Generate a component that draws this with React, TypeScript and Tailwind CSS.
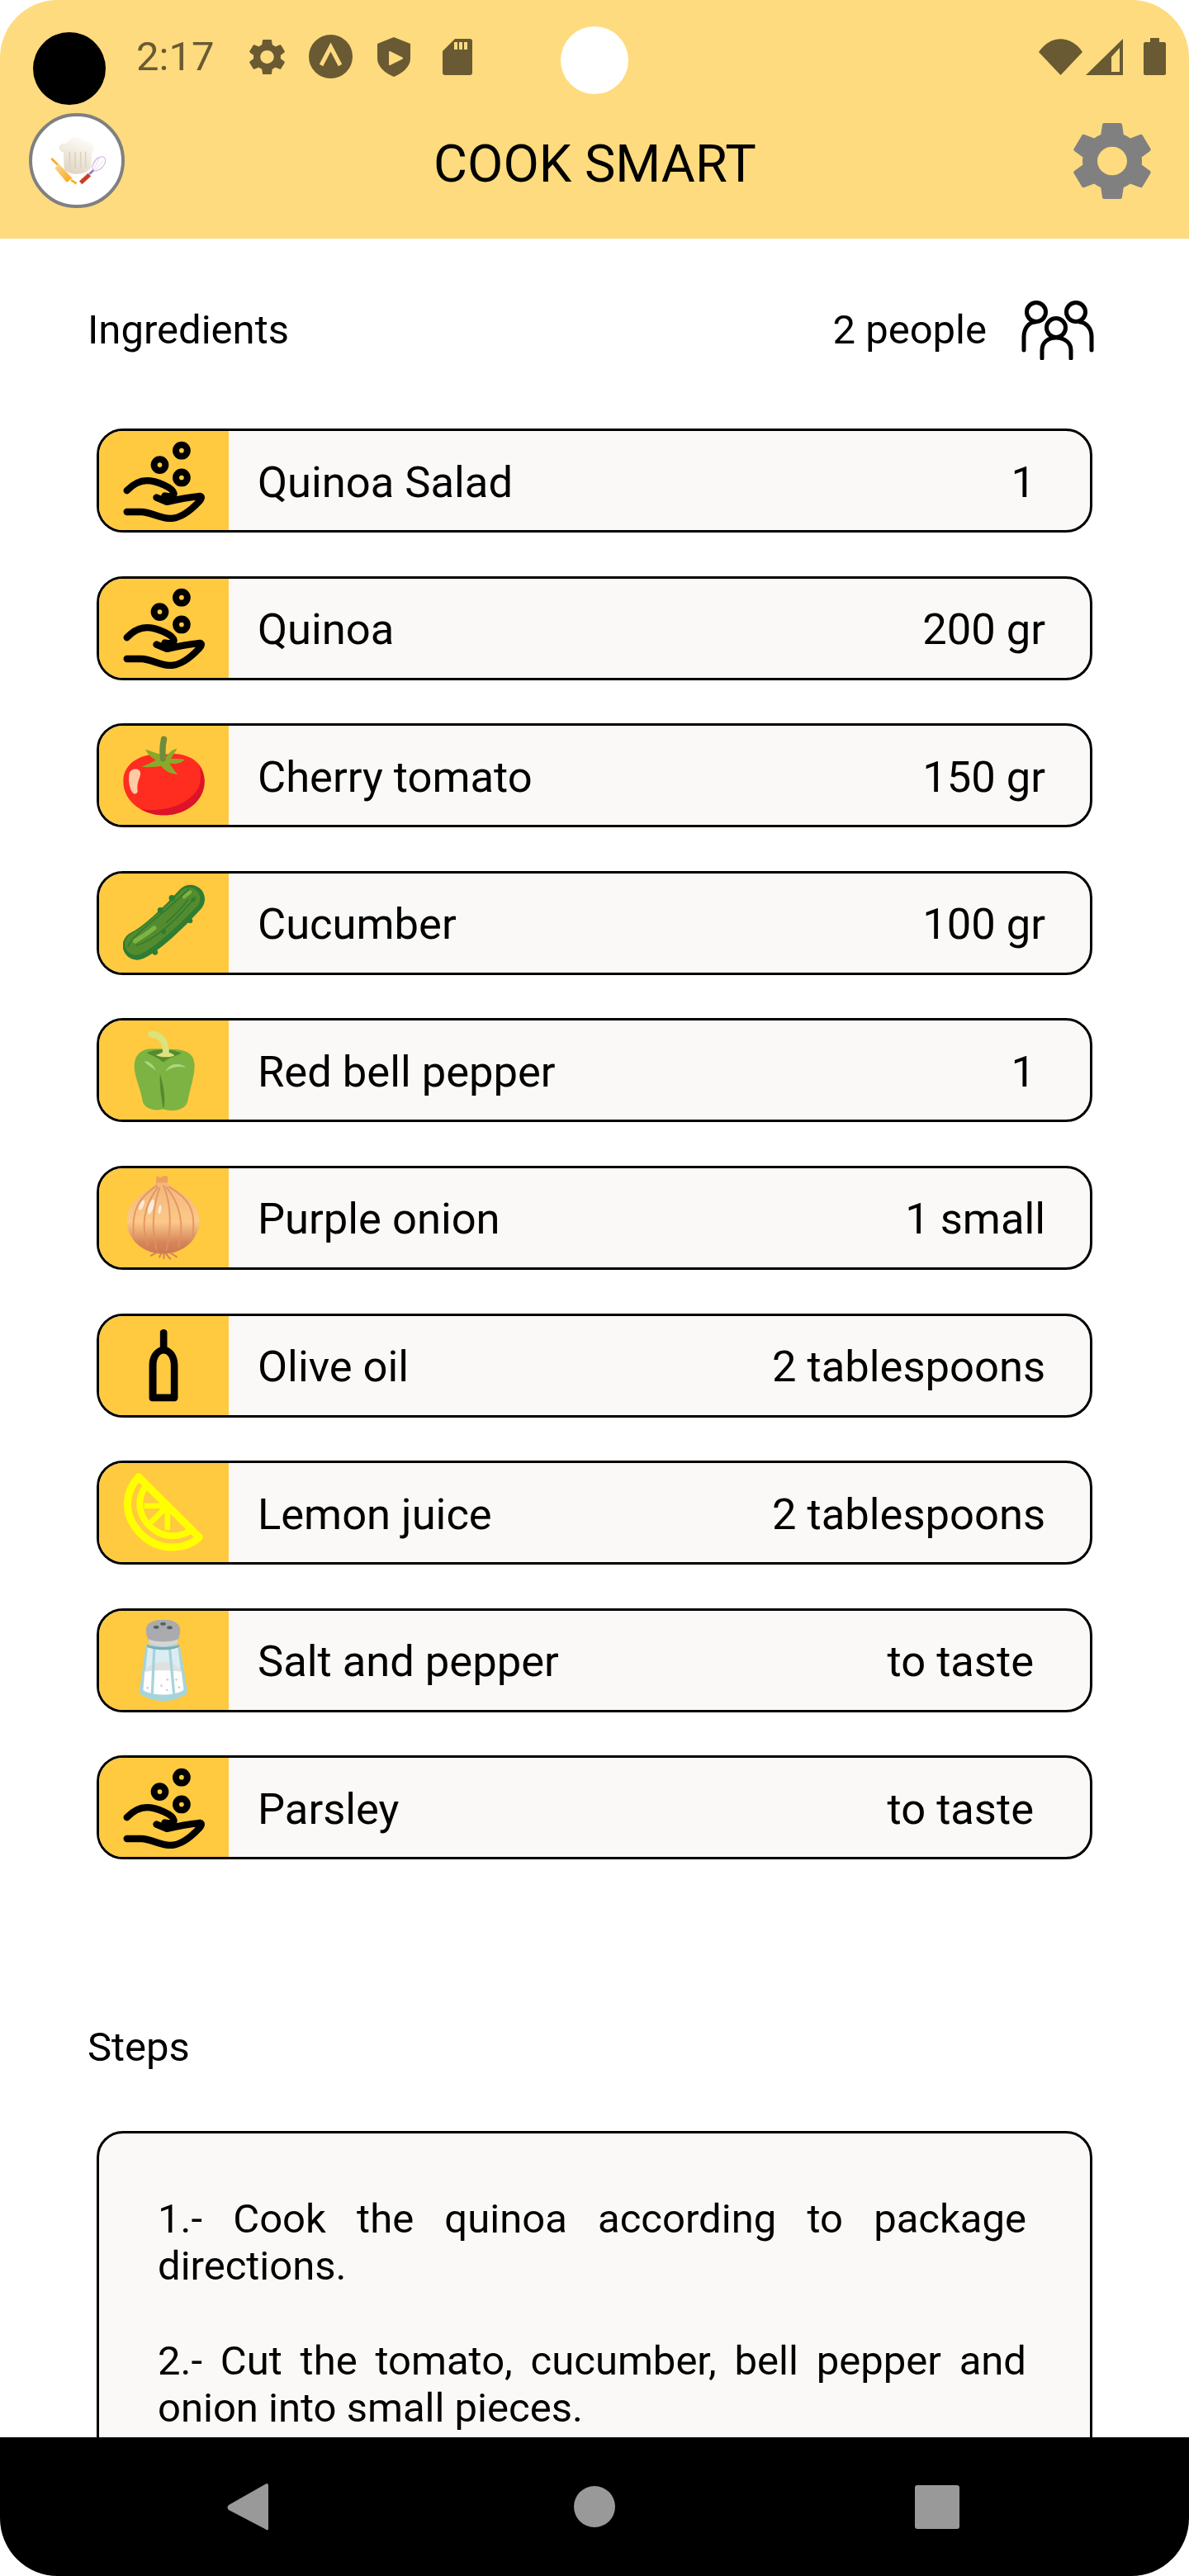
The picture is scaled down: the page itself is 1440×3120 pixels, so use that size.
const settingsPath =
  "M19.14 12.94c.04-.3.06-.61.06-.94 0-.32-.02-.64-.07-.94l2.03-1.58c.18-.14.23-.41.12-.61l-1.92-3.32c-.12-.22-.37-.29-.59-.22l-2.39.96c-.5-.38-1.03-.7-1.62-.94l-.36-2.54c-.04-.24-.24-.41-.48-.41h-3.84c-.24 0-.43.17-.47.41l-.36 2.54c-.59.24-1.13.57-1.62.94l-2.39-.96c-.22-.08-.47 0-.59.22L2.74 8.87c-.12.21-.08.47.12.61l2.03 1.58c-.05.3-.09.63-.09.94s.02.64.07.94l-2.03 1.58c-.18.14-.23.41-.12.61l1.92 3.32c.12.22.37.29.59.22l2.39-.96c.5.38 1.03.7 1.62.94l.36 2.54c.05.24.24.41.48.41h3.84c.24 0 .44-.17.47-.41l.36-2.54c.59-.24 1.13-.56 1.62-.94l2.39.96c.22.08.47 0 .59-.22l1.92-3.32c.12-.22.07-.47-.12-.61l-2.01-1.58zM12 15.6c-1.98 0-3.6-1.62-3.6-3.6s1.62-3.6 3.6-3.6 3.6 1.62 3.6 3.6-1.62 3.6-3.6 3.6z";

function SettingsIcon({ className }: { className: string }) {
  return (
    <svg viewBox="2.6 2 18.8 20" preserveAspectRatio="none" className={className}>
      <path d={settingsPath} fill="currentColor" />
    </svg>
  );
}

function HandIcon() {
  return (
    <svg viewBox="149 98 296 296" className="h-[99px] w-[99px]">
      <g fill="none" stroke="#000" strokeWidth="24">
        <circle cx="361" cy="136" r="20.5" />
        <circle cx="282" cy="188" r="20.5" />
        <circle cx="361" cy="234" r="20.5" />
      </g>
      <path
        d="M163 281C185 258 210 245 235 245C270 245 330 270 333 291C334 300 320 304 300 300M270 306L308 322C350 312 390 305 428 301C436 302 432 312 425 320C395 352 360 382 320 382C280 382 250 358 215 358L163 358"
        fill="none"
        stroke="#000"
        strokeWidth="25"
        strokeLinecap="round"
        strokeLinejoin="round"
      />
    </svg>
  );
}

function TomatoIcon() {
  return (
    <svg viewBox="117 60 296 290" className="h-[97px] w-[99px]">
      <path
        d="M265 130C300 118 412 125 412 225C412 300 340 348 265 348C190 348 118 300 118 225C118 140 220 118 265 130Z"
        fill="#ff2d20"
      />
      <path
        d="M392 168C408 190 412 210 412 225C412 300 340 348 265 348C230 348 195 335 180 325C260 340 360 310 392 245C400 220 400 190 392 168Z"
        fill="#dc1329"
      />
      <path
        d="M140 195C145 178 178 175 180 195C180 215 165 225 170 262C165 278 150 270 145 255C138 235 136 215 140 195Z"
        fill="#ffcba6"
      />
      <path
        d="M198 110C215 115 232 120 250 128L275 135C285 120 295 110 312 107C308 120 298 130 290 142C305 145 325 142 340 147C330 160 305 165 285 160C295 175 305 190 315 200C290 200 265 185 255 170C235 172 210 178 185 172C205 165 225 155 235 148C220 140 205 125 198 110Z"
        fill="#8aa92b"
      />
      <path d="M262 143C259 120 260 95 265 73" fill="none" stroke="#6d8b3c" strokeWidth="22" strokeLinecap="round" />
    </svg>
  );
}

function CucumberIcon() {
  return (
    <svg viewBox="149 87 296 296" className="h-[99px] w-[99px]">
      <path d="M200 318C250 295 335 215 393 150" fill="none" stroke="#2e7d32" strokeWidth="104" strokeLinecap="round" />
      <path d="M196 312C246 288 330 208 388 148" fill="none" stroke="#558b2f" strokeWidth="80" strokeLinecap="round" />
      <path d="M192 302C225 282 245 268 262 254" fill="none" stroke="#7cb342" strokeWidth="16" strokeLinecap="round" />
      <path d="M370 142L392 124" fill="none" stroke="#7cb342" strokeWidth="12" strokeLinecap="round" />
      <path
        d="M166 322C190 270 280 220 388 112M195 318C260 300 340 230 412 140M305 235C340 205 365 180 385 150"
        fill="none"
        stroke="#2e7d32"
        strokeWidth="5"
      />
      <g fill="#2e7d32">
        <circle cx="403" cy="152" r="8" />
        <circle cx="296" cy="268" r="9" />
        <circle cx="326" cy="146" r="11" />
        <circle cx="284" cy="190" r="10" />
        <circle cx="392" cy="228" r="9" />
        <circle cx="265" cy="342" r="10" />
      </g>
    </svg>
  );
}

function PepperIcon() {
  return (
    <svg viewBox="149 620 296 296" className="h-[99px] w-[99px]">
      <path
        d="M240 690C215 695 190 710 190 755C190 790 215 840 220 880C225 905 265 918 295 908C320 918 375 915 383 880C390 840 408 790 408 750C408 710 380 695 340 692C320 690 270 688 240 690Z"
        fill="#7cb342"
      />
      <path d="M235 705C255 688 330 688 360 705C345 715 320 718 295 738C270 718 250 712 235 705Z" fill="#558b2f" />
      <path d="M283 780C280 830 290 880 295 908C305 880 298 830 283 780Z" fill="#558b2f" />
      <path d="M226 736C240 732 258 745 268 768C250 755 236 748 226 736Z" fill="#aed581" />
      <path d="M303 772C315 745 350 735 377 758C350 750 325 755 303 772Z" fill="#aed581" />
      <path
        d="M238 636C240 622 265 622 285 634C305 645 315 670 316 704C325 706 332 710 335 714C320 722 285 722 268 712C280 708 288 705 292 702C294 680 285 658 262 650C250 652 238 648 238 636Z"
        fill="#dce27d"
      />
    </svg>
  );
}

function OnionIcon() {
  return (
    <svg viewBox="149 72 296 310" className="h-[103px] w-[99px]">
      <defs>
        <linearGradient id="onionBody" x1="0" y1="0" x2="0" y2="1">
          <stop offset="0" stopColor="#f3b67c" />
          <stop offset="0.55" stopColor="#fcc98a" />
          <stop offset="0.85" stopColor="#d58358" />
          <stop offset="1" stopColor="#cc7a53" />
        </linearGradient>
      </defs>
      <path d="M270 76L285 82L300 74L310 78L312 110L268 110Z" fill="#eda05f" />
      <path
        d="M275 100C240 135 162 160 162 240C162 310 225 360 294 360C365 360 426 310 426 240C426 160 340 135 310 100Z"
        fill="url(#onionBody)"
      />
      <g fill="none" stroke="#e2925f" strokeWidth="6" opacity="0.85">
        <path d="M272 110C215 150 175 190 188 300" />
        <path d="M276 115C235 170 205 240 240 330" />
        <path d="M282 118C258 180 250 270 270 345" />
        <path d="M295 110C325 180 325 270 305 350" />
        <path d="M305 115C350 170 375 240 350 335" />
        <path d="M315 115C375 150 420 190 400 300" />
      </g>
      <g fill="#fff" opacity="0.7">
        <ellipse cx="216" cy="182" rx="7" ry="20" transform="rotate(25 216 182)" />
        <ellipse cx="250" cy="188" rx="9" ry="28" transform="rotate(18 250 188)" />
        <ellipse cx="282" cy="198" rx="5" ry="16" transform="rotate(10 282 198)" />
      </g>
      <path
        d="M280 350L248 367M288 355L280 374M297 355L297 378M303 358L322 380M318 355L345 372"
        fill="none"
        stroke="#d58358"
        strokeWidth="6"
      />
    </svg>
  );
}

function BottleIcon() {
  return (
    <svg viewBox="149 620 296 280" className="h-[93px] w-[99px]">
      <path
        fillRule="evenodd"
        d="M283 640C283 625 309 625 309 640V694C330 702 348 725 348 760V880C348 887 343 892 336 892H254C247 892 243 887 243 880V760C243 725 262 702 283 694ZM270 865H322V760C322 735 310 718 296 718C282 718 270 735 270 760Z"
        fill="#000"
      />
    </svg>
  );
}

function LemonIcon() {
  return (
    <svg viewBox="149 70 296 296" className="h-[99px] w-[99px]">
      <g fill="none" stroke="#ffff00" strokeLinejoin="round" strokeLinecap="round">
        <path d="M205 87L425 306C385 345 290 365 220 300C150 235 150 150 205 87Z" strokeWidth="27" />
        <path d="M232 120C195 170 205 230 250 270C290 305 345 312 395 282" strokeWidth="24" />
        <path d="M225 192H310V280M310 192L250 252" strokeWidth="20" strokeLinecap="butt" />
      </g>
    </svg>
  );
}

function SaltIcon() {
  return (
    <svg viewBox="149 600 296 300" className="h-[100px] w-[99px]">
      <path d="M232 692L354 692L384 868C360 885 335 898 295 898C260 898 228 885 207 868Z" fill="#a7d3db" />
      <path d="M238 705H348L366 850C340 875 250 875 224 850Z" fill="#dcecf3" />
      <path d="M226 790C260 745 330 745 362 790L370 855C340 878 250 878 222 855Z" fill="#e0e0e0" />
      <path d="M228 792C260 785 330 785 360 792L368 858C340 880 250 880 222 858Z" fill="#fff" />
      <path d="M262 705L254 882M318 705L334 878" fill="none" stroke="#a7d3db" strokeWidth="10" />
      <path d="M234 692C260 705 330 705 354 692L352 700C330 716 260 716 236 700Z" fill="#78aeb8" />
      <path
        d="M232 640C232 612 262 602 295 602C325 602 356 612 356 640C356 660 350 670 348 682C340 705 250 705 242 682C240 670 232 660 232 640Z"
        fill="#a9abae"
      />
      <path d="M242 672C260 685 330 685 348 672L348 684C335 704 255 704 242 684Z" fill="#d6d6d6" />
      <g fill="#5b6066">
        <ellipse cx="269" cy="629" rx="10" ry="6" />
        <ellipse cx="294" cy="617" rx="10" ry="6" />
        <ellipse cx="318" cy="631" rx="10" ry="6" />
      </g>
      <g fill="#cfcfcf">
        <circle cx="238" cy="850" r="4" />
        <circle cx="288" cy="842" r="4" />
        <circle cx="310" cy="820" r="4" />
        <circle cx="342" cy="820" r="4" />
        <circle cx="308" cy="858" r="4" />
        <circle cx="352" cy="848" r="4" />
      </g>
    </svg>
  );
}

function PeopleIcon() {
  return (
    <svg viewBox="0 0 88 72" className="h-[72px] w-[88px]" fill="none" stroke="#000" strokeWidth="5">
      <circle cx="18" cy="14" r="11.5" />
      <circle cx="66" cy="14" r="11.5" />
      <circle cx="42" cy="33" r="11.5" />
      <path d="M3 60V44C3 34 9 26 17 26" strokeLinecap="round" />
      <path d="M85 60V44C85 34 79 27 71 26" strokeLinecap="round" />
      <path d="M25 70V60C25 51 32 45 42 45C52 45 60 51 60 60V70" strokeLinecap="round" />
    </svg>
  );
}

function LogoDrawing() {
  return (
    <svg viewBox="57 64 321 321" className="h-[107px] w-[107px]">
      <defs>
        <linearGradient id="hat" x1="0.7" y1="0" x2="0.3" y2="1">
          <stop offset="0" stopColor="#fffdf9" />
          <stop offset="1" stopColor="#dfd4c1" />
        </linearGradient>
        <linearGradient id="pin" x1="0" y1="0" x2="1" y2="1">
          <stop offset="0" stopColor="#f6d692" />
          <stop offset="1" stopColor="#fba81c" />
        </linearGradient>
      </defs>
      <path d="M124 217L147 240" stroke="#f9a825" strokeWidth="8" />
      <path d="M195 295L215 308" stroke="#f9a825" strokeWidth="8" />
      <path d="M150 240L195 288L180 300L140 252Z" fill="url(#pin)" stroke="url(#pin)" strokeWidth="6" />
      <path
        d="M168 195C140 185 150 158 180 162C190 135 230 130 245 155C270 155 290 175 270 195L268 250C245 280 190 280 170 255Z"
        fill="url(#hat)"
      />
      <path d="M190 192V250M210 192V252M230 192V252M248 192V250" stroke="#ded2bb" strokeWidth="5" />
      <path d="M230 305L262 276" stroke="#c93d22" strokeWidth="15" />
      <path d="M262 273L278 258" stroke="#8a80c8" strokeWidth="8" />
      <ellipse
        cx="296"
        cy="236"
        rx="18"
        ry="30"
        transform="rotate(42 296 236)"
        fill="none"
        stroke="#d8aedb"
        strokeWidth="3"
      />
      <path d="M280 252L300 212M285 257L312 224M276 244L290 212" stroke="#a99ad4" strokeWidth="2" strokeDasharray="3 3" />
    </svg>
  );
}

function StatusBar() {
  return (
    <div className="flex h-[137px] items-center pl-[165px] pr-[28px] text-[#695a33]">
      <span className="w-[137px] text-[49px] leading-[57px]">2:17</span>
      <SettingsIcon className="h-[44px] w-[43px]" />
      <svg viewBox="0 0 53 53" className="ml-[29px] h-[53px] w-[53px]">
        <circle cx="26.5" cy="26.5" r="26.5" fill="currentColor" />
        <path d="M15 37L26.5 15L38 37" fill="none" stroke="#fedb7e" strokeWidth="5" />
      </svg>
      <svg viewBox="0 0 40 48" className="ml-[30px] h-[48px] w-[40px]">
        <path d="M20 0L40 8V26C40 36 30 44 20 48C10 44 0 36 0 26V8Z" fill="currentColor" />
        <path d="M15 18L30 25.5L15 33Z" fill="#fedb7e" stroke="#fedb7e" strokeWidth="2" strokeLinejoin="round" />
      </svg>
      <svg viewBox="0 0 36 44" className="ml-[39px] h-[44px] w-[36px]">
        <path d="M15 0H33C35 0 36 1 36 3V41C36 43 35 44 33 44H3C1 44 0 43 0 41V15Z" fill="currentColor" />
        <path d="M14 4H18V13H14ZM20 4H24V13H20ZM26 4H30V13H26Z" fill="#fedb7e" />
      </svg>
      <div className="ml-auto flex items-center">
        <svg viewBox="0 0 53 44" className="h-[44px] w-[53px]">
          <path d="M0 16C14 -5 39 -5 53 16L26.5 44Z" fill="currentColor" />
        </svg>
        <svg viewBox="0 0 45 44" className="ml-[4px] h-[44px] w-[45px]">
          <path fillRule="evenodd" d="M45 0V44H0ZM31 40H41V11L31 22Z" fill="currentColor" />
        </svg>
        <svg viewBox="0 0 27 45" className="ml-[25px] h-[45px] w-[27px]">
          <path d="M8 0H19V5H25C26 5 27 6 27 7V43C27 44 26 45 25 45H2C1 45 0 44 0 43V7C0 6 1 5 2 5H8Z" fill="currentColor" />
        </svg>
      </div>
    </div>
  );
}

const ingredients = [
  { name: "Quinoa Salad", amount: "1", icon: <HandIcon />, pad: "pr-[66px]" },
  { name: "Quinoa", amount: "200 gr", icon: <HandIcon />, pad: "pr-[54px]" },
  { name: "Cherry tomato", amount: "150 gr", icon: <TomatoIcon />, pad: "pr-[54px]" },
  { name: "Cucumber", amount: "100 gr", icon: <CucumberIcon />, pad: "pr-[54px]" },
  { name: "Red bell pepper", amount: "1", icon: <PepperIcon />, pad: "pr-[66px]" },
  { name: "Purple onion", amount: "1 small", icon: <OnionIcon />, pad: "pr-[54px]" },
  { name: "Olive oil", amount: "2 tablespoons", icon: <BottleIcon />, pad: "pr-[54px]" },
  { name: "Lemon juice", amount: "2 tablespoons", icon: <LemonIcon />, pad: "pr-[54px]" },
  { name: "Salt and pepper", amount: "to taste", icon: <SaltIcon />, pad: "pr-[68px]" },
  { name: "Parsley", amount: "to taste", icon: <HandIcon />, pad: "pr-[68px]" },
];

export default function App() {
  return (
    <div className="relative flex h-[3120px] w-[1440px] flex-col overflow-hidden rounded-[70px] bg-white font-['Roboto',sans-serif] text-[49px] leading-[57.4px] text-black">
      <header className="h-[289px] shrink-0 bg-[#fedb7e]">
        <StatusBar />
        <div className="flex h-[152px] items-start justify-between pl-[35px] pr-[46px]">
          <div className="flex h-[115px] w-[116px] items-center justify-center rounded-full border-4 border-[#808080] bg-white">
            <LogoDrawing />
          </div>
          <h1 className="mr-[10px] mt-[25px] text-[63px] leading-[74px] font-normal">COOK SMART</h1>
          <SettingsIcon className="mt-[10px] h-[96px] w-[94px] text-[#808080]" />
        </div>
      </header>

      <main className="min-h-0 flex-1 overflow-hidden">
        <div className="mt-[56px] flex h-[106px] items-center justify-between pl-[106px] pr-[115px] pt-[4px]">
          <span>Ingredients</span>
          <div className="flex items-center gap-[42px]">
            <span>2 people</span>
            <PeopleIcon />
          </div>
        </div>

        <ul className="mt-[68px] flex flex-col gap-[52.6px] pl-[117px] pr-[117px]">
          {ingredients.map((item, index) => (
            <li
              key={index}
              className="flex h-[126px] items-stretch overflow-hidden rounded-[32px] border-[3.5px] border-black bg-[#faf9f7] text-[52.5px] leading-[62px]"
            >
              <div className="flex w-[157px] shrink-0 items-center justify-center bg-[#ffc940]">{item.icon}</div>
              <div className={`flex flex-1 items-center justify-between pl-[35px] pt-[3px] ${item.pad}`}>
                <span>{item.name}</span>
                <span>{item.amount}</span>
              </div>
            </li>
          ))}
        </ul>

        <p className="mt-[199px] pl-[106px]">Steps</p>
        <section className="mx-[117px] mt-[72px] h-[560px] rounded-[32px] border-[3.5px] border-black bg-[#faf9f7] pl-[71px] pr-[77px] pt-[75px] text-justify">
          <p>1.- Cook the quinoa according to package directions.</p>
          <p className="mt-[57.4px]">2.- Cut the tomato, cucumber, bell pepper and onion into small pieces.</p>
        </section>
      </main>

      <nav className="flex h-[168px] shrink-0 items-start bg-black pt-[56px]">
        <svg viewBox="0 0 50 57" className="ml-[275px] h-[57px] w-[50px]">
          <path d="M48 0C50 0 50 2 50 3V54C50 57 48 57 46 55L2 32C0 30 0 28 2 26L46 1Z" fill="#999" />
        </svg>
        <div className="ml-[370px] mt-[3px] h-[50px] w-[50px] rounded-full bg-[#999]" />
        <div className="ml-[363px] mt-[2px] h-[53px] w-[54px] rounded-[3px] bg-[#999]" />
      </nav>

      <div className="absolute left-[40px] top-[39px] h-[88px] w-[88px] rounded-full bg-black" />
      <div className="absolute left-[679px] top-[32px] h-[82px] w-[82px] rounded-full bg-white" />
    </div>
  );
}
